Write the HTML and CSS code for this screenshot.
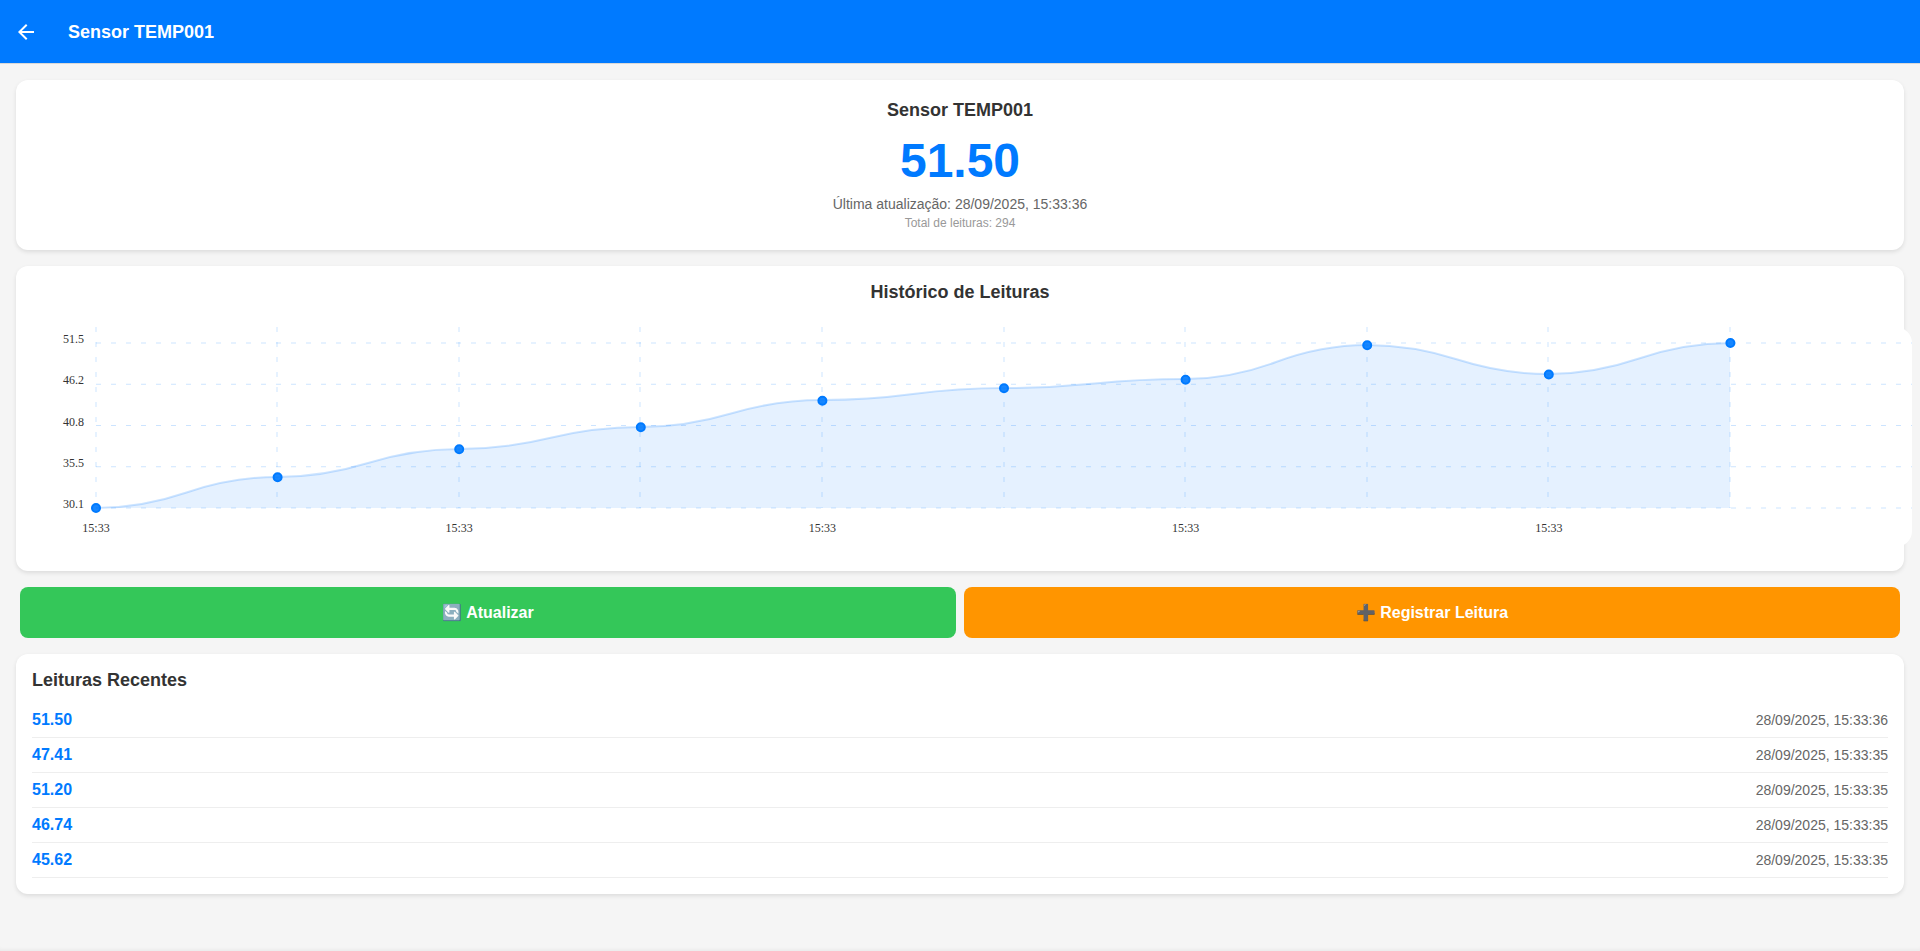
FILE: index.html
```html
<!DOCTYPE html>
<html lang="pt-BR">
<head>
  <meta charset="utf-8">
  <meta name="viewport" content="width=device-width, initial-scale=1">
  <title>Sensor TEMP001</title>
  <link rel="stylesheet" href="styles.css">
</head>
<body>
  <header class="topbar">
    <button class="back" type="button" aria-label="Voltar">
      <svg class="back-icon" viewBox="0 0 24 24" aria-hidden="true"><path d="M20 11H7.83l5.59-5.59L12 4l-8 8 8 8 1.41-1.41L7.83 13H20v-2z"/></svg>
    </button>
    <h1 class="topbar-title">Sensor TEMP001</h1>
  </header>

  <main class="content">
    <section class="card summary">
      <h2 class="heading">Sensor TEMP001</h2>
      <p class="current">51.50</p>
      <p class="updated">Última atualização: 28/09/2025, 15:33:36</p>
      <p class="total">Total de leituras: 294</p>
    </section>

    <section class="card history">
      <h2 class="heading">Histórico de Leituras</h2>
      <div class="chart"><svg class="chart-svg" id="chart" role="img" aria-label="Histórico de Leituras"></svg></div>
    </section>

    <div class="actions">
      <button class="action refresh" type="button">🔄 Atualizar</button>
      <button class="action register" type="button">➕ Registrar Leitura</button>
    </div>

    <section class="card">
      <h2 class="heading">Leituras Recentes</h2>
      <ul class="readings">
        <li class="reading"><span class="value">51.50</span><time class="time">28/09/2025, 15:33:36</time></li>
        <li class="reading"><span class="value">47.41</span><time class="time">28/09/2025, 15:33:35</time></li>
        <li class="reading"><span class="value">51.20</span><time class="time">28/09/2025, 15:33:35</time></li>
        <li class="reading"><span class="value">46.74</span><time class="time">28/09/2025, 15:33:35</time></li>
        <li class="reading"><span class="value">45.62</span><time class="time">28/09/2025, 15:33:35</time></li>
      </ul>
    </section>
  </main>
  <script src="chart.js"></script>
</body>
</html>
```

FILE: styles.css
```css
* {
  box-sizing: border-box;
}

body {
  margin: 0;
  min-height: 100vh;
  display: flex;
  flex-direction: column;
  background: #f5f5f5;
  color: #333;
  font-family: "Liberation Sans", Arial, sans-serif;
}

h1, h2, p, ul {
  margin: 0;
  padding: 0;
}

.topbar {
  display: flex;
  align-items: center;
  gap: 20px;
  height: 64px;
  padding: 0 4px;
  background: #007aff;
  box-shadow: inset 0 -1px #d8d8d8;
}

.back {
  display: grid;
  place-items: center;
  width: 44px;
  height: 44px;
  padding: 0;
  border: 0;
  background: none;
}

.back-icon {
  width: 24px;
  height: 24px;
  fill: #fff;
}

.topbar-title {
  color: #fff;
  font-size: 18px;
  line-height: 22px;
}

.content {
  flex: 1;
  display: flex;
  flex-direction: column;
  gap: 16px;
  padding: 16px;
  box-shadow: inset 0 -4px 4px -3px rgba(0, 0, 0, 0.06);
}

.card {
  padding: 16px;
  background: #fff;
  border-radius: 12px;
  box-shadow: 0 2px 4px rgba(0, 0, 0, 0.1);
}

.heading {
  margin-bottom: 12px;
  font-size: 18px;
  line-height: 21px;
}

.summary {
  padding: 20px;
  text-align: center;
}

.current {
  color: #007aff;
  font-size: 48px;
  font-weight: bold;
  line-height: 55px;
}

.updated {
  margin-top: 8px;
  color: #666;
  font-size: 14px;
  line-height: 16px;
}

.total {
  margin-top: 4px;
  color: #999;
  font-size: 12px;
  line-height: 14px;
}

.history .heading {
  margin-bottom: 24px;
  text-align: center;
}

.chart {
  height: 220px;
  margin: 0 -24px 8px 0;
  background: #fff;
  border-radius: 16px;
  overflow: hidden;
}

.chart-svg {
  display: block;
  width: 100%;
  height: 100%;
  font-family: "Liberation Serif", "Times New Roman", serif;
  font-size: 12px;
  fill: #333;
}

.grid-line {
  stroke: #007aff;
  stroke-opacity: 0.2;
  stroke-dasharray: 5 10;
}

.area {
  fill: #007aff;
  fill-opacity: 0.1;
}

.curve {
  fill: none;
  stroke: #007aff;
  stroke-opacity: 0.2;
  stroke-width: 2;
}

.dot {
  fill: #007aff;
  fill-opacity: 0.9;
  stroke: #007aff;
  stroke-width: 2;
}

.y-label {
  text-anchor: end;
}

.x-label {
  text-anchor: middle;
}

.actions {
  display: flex;
  gap: 8px;
  padding: 0 4px;
}

.action {
  flex: 1;
  padding: 16px;
  border: 0;
  border-radius: 8px;
  color: #fff;
  font-family: inherit;
  font-size: 16px;
  font-weight: bold;
  line-height: 19px;
}

.refresh {
  background: #34c759;
}

.register {
  background: #ff9500;
}

.readings {
  list-style: none;
}

.reading {
  display: flex;
  align-items: center;
  justify-content: space-between;
  padding: 8px 0;
  border-bottom: 1px solid #eee;
}

.value {
  color: #007aff;
  font-size: 16px;
  font-weight: bold;
  line-height: 18px;
}

.time {
  color: #666;
  font-size: 14px;
  line-height: 16px;
}
```

FILE: chart.js
```js
const values = [30.1, 34.08, 37.71, 40.57, 44, 45.62, 46.74, 51.2, 47.41, 51.5];
const yLabels = ['30.1', '35.5', '40.8', '46.2', '51.5'];
const LEFT = 64;
const TOP = 16;
const PLOT = 165;

const svg = document.getElementById('chart');

function add(name, attrs, text) {
  const el = document.createElementNS('http://www.w3.org/2000/svg', name);
  for (const key in attrs) el.setAttribute(key, attrs[key]);
  if (text) el.textContent = text;
  svg.appendChild(el);
}

function draw() {
  const width = svg.parentNode.clientWidth;
  const min = Math.min(...values);
  const max = Math.max(...values);
  const base = TOP + PLOT;
  const xOf = i => LEFT + i * (width - LEFT) / values.length;
  const yOf = v => base - (v - min) / (max - min) * PLOT;

  svg.replaceChildren();

  yLabels.forEach((label, i) => {
    const y = base - i * PLOT / 4;
    add('line', { class: 'grid-line', x1: LEFT, x2: width, y1: y, y2: y });
    add('text', { class: 'y-label', x: LEFT - 12, y: y }, label);
  });

  values.forEach((v, i) => {
    const x = Math.floor(xOf(i));
    add('line', { class: 'grid-line', x1: x, x2: x, y1: 0, y2: base });
    if (i % 2 === 0) add('text', { class: 'x-label', x: xOf(i), y: base + 24 }, '15:33');
  });

  const pts = values.map((v, i) => [Math.floor(xOf(i)), Math.floor(yOf(v))]);
  let path = 'M' + pts[0];
  for (let i = 0; i < pts.length - 1; i++) {
    const [x0, y0] = pts[i];
    const [x1, y1] = pts[i + 1];
    const xm = (x0 + x1) / 2;
    const ym = (y0 + y1) / 2;
    path += ` Q${(x0 + xm) / 2},${y0} ${xm},${ym} Q${(x1 + xm) / 2},${y1} ${x1},${y1}`;
  }
  add('path', { class: 'area', d: `${path} L${pts[pts.length - 1][0]},${base} L${LEFT},${base} Z` });
  add('path', { class: 'curve', d: path });

  values.forEach((v, i) => add('circle', { class: 'dot', cx: xOf(i), cy: yOf(v), r: 4 }));
}

draw();
window.addEventListener('resize', draw);
```
